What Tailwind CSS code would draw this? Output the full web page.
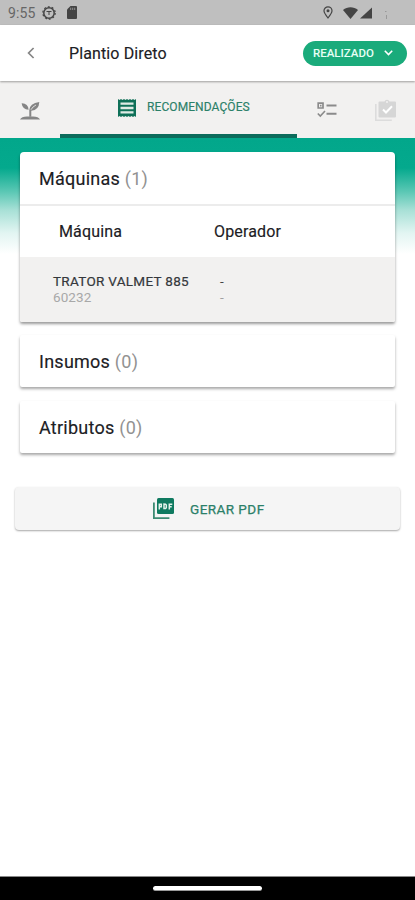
<!DOCTYPE html>
<html lang="pt-BR">
<head>
<meta charset="utf-8">
<meta name="viewport" content="width=device-width, initial-scale=1">
<title>Plantio Direto</title>
<script src="https://cdn.jsdelivr.net/npm/@tailwindcss/browser@4"></script>
</head>
<body class="bg-white font-['Roboto',sans-serif] text-[#1c2024]">
<div class="flex h-[900px] w-[415px] flex-col overflow-hidden bg-white">
  <!-- Status bar -->
  <div class="flex h-[25px] shrink-0 items-center bg-[#bfbfbf] pl-[8px] text-[#444]">
    <span class="w-[34px] pt-[1px] text-[14px] tracking-[0.1px] text-[#666]">9:55</span>
    <svg class="h-[14px] w-[14px]" viewBox="0 0 14 14" fill="none" stroke="currentColor"><circle cx="7" cy="7" r="5.2" stroke-width="1.5"/><circle cx="7" cy="7" r="6.2" stroke-width="1.2" stroke-dasharray="1.9 2"/><path d="M4.500 5.500h5M7 5.500v3.500" stroke-width="1"/></svg>
    <svg class="ml-[11px] h-[13px] w-[10px]" viewBox="0 0 10 13" fill="currentColor"><path d="M3.500 0H9a1 1 0 0 1 1 1v11a1 1 0 0 1-1 1H1a1 1 0 0 1-1-1V3.500z"/><path d="M3.700 1.700v2.300M5.700 1.700v2.300M7.700 1.700v2.300" stroke="#999" stroke-width=".9"/></svg>
    <svg class="ml-[246px] h-[13px] w-[10px]" viewBox="0 0 10 13" fill="none" stroke="currentColor"><path d="M5 12C2.600 9 1 6.900 1 4.800a4 4 0 0 1 8 0C9 6.900 7.400 9 5 12z" stroke-width="1.200"/><circle cx="5" cy="4.800" r="1.500" fill="currentColor" stroke="none"/></svg>
    <svg class="ml-[10px] h-[12px] w-[15px]" viewBox="0 0 15 12" fill="currentColor"><path d="M0 3C4.300-.8 10.700-.8 15 3L7.500 12z"/></svg>
    <svg class="ml-[2px] h-[12px] w-[12px]" viewBox="0 0 13 12" fill="currentColor"><path d="M13 0v12H0z"/></svg>
    <svg class="ml-[13px] h-[12px] w-[3px]" viewBox="0 0 3 12" fill="none" stroke="#999"><path d="M0 4.500h1.500M1.500 8v4"/></svg>
  </div>

  <!-- Header -->
  <header class="z-10 flex h-[56px] shrink-0 items-center bg-white pl-[27px] pr-[8px] shadow-[0_1px_2px_rgba(0,0,0,0.35)]">
    <svg class="h-[12px] w-[8px]" viewBox="0 0 8 12" fill="none" stroke="#858585" stroke-width="1.700"><path d="M6.600 1L1.600 6l5 5"/></svg>
    <h1 class="ml-[34px] pt-[2px] text-[16px] leading-none tracking-[0.12px] [-webkit-text-stroke:0.15px_currentColor]">Plantio Direto</h1>
    <button class="ml-auto flex h-[25px] w-[104px] items-center rounded-full bg-[#1aab7b] pl-[10px] text-[11.5px] font-medium tracking-[0px] text-[#e8fff6]">
      <span class="w-[71px] pt-[1px] text-left">REALIZADO</span>
      <svg class="h-[6px] w-[9px]" viewBox="0 0 9 6" fill="none" stroke="#fff" stroke-width="1.600"><path d="M.8.8l3.700 3.700L8.200.8"/></svg>
    </button>
  </header>

  <!-- Tabs -->
  <nav class="flex h-[57px] shrink-0 bg-[#f2f1f0]">
    <div class="flex w-[60px] justify-center pt-[19px]">
      <svg class="h-[20px] w-[20px]" viewBox="0 0 20 20" fill="#858585"><path d="M0 19.500q1.500-3 7-3h6q5.500 0 7 3z"/><path d="M9.300 16.700V10q.3-6.500 10-8q-.3 8-8 8.800v5.900z"/><path d="M1.600 3.300q6.500-.2 7 6.500Q2.500 9.500 1.600 3.300z"/><path d="M11 9.700q1.500-3 5-4.700" stroke="#f2f1f0" stroke-width=".8" fill="none"/></svg>
    </div>
    <div class="flex w-[237px] border-b-4 border-[#0c6b5b] pl-[58px] pt-[18px] text-[#0f7058]">
      <svg class="h-[18px] w-[18px]" viewBox="0 0 18 18" fill="currentColor"><path d="M0 0l1.500 1L3 0l1.500 1L6 0l1.500 1L9 0l1.500 1L12 0l1.500 1L15 0l1.500 1L18 0v18l-1.500-1-1.500 1-1.500-1-1.500 1-1.500-1L9 18l-1.500-1L6 18l-1.500-1L3 18l-1.500-1L0 18z"/><path d="M2.500 4.700h13M2.500 9h13M2.500 13.300h13" stroke="#dfebe5" stroke-width="2.300"/></svg>
      <span class="ml-[11px] mt-[2px] text-[12px] leading-[13px] tracking-[0.09px] text-[#2b8068] [-webkit-text-stroke:0.15px_currentColor]">RECOMENDAÇÕES</span>
    </div>
    <div class="flex w-[59px] justify-center pt-[21px]">
      <svg class="h-[16px] w-[20px]" viewBox="0 0 20 16" fill="none" stroke="#8b8b8b"><path d="M1.200 1.200h4.800v4.800H1.200zM3 3.600h1.500" stroke-width="1.700"/><path d="M9.500 3.500H19.500M9.500 11.700H19.500" stroke-width="2"/><path d="M.8 11.500l2.500 2.500L8 9" stroke-width="1.600"/></svg>
    </div>
    <div class="flex flex-1 justify-center pt-[18px]">
      <svg class="h-[22px] w-[21px]" viewBox="0 0 21 22"><path d="M.8 5v16.200h16" fill="none" stroke="#dcdcdc" stroke-width="1.600"/><path d="M4.500 2.500h5a2.700 2.700 0 0 1 5 0H20a1 1 0 0 1 1 1v14a1 1 0 0 1-1 1H4.500a1 1 0 0 1-1-1v-14a1 1 0 0 1 1-1z" fill="#d6d6d6"/><circle cx="12" cy="3" r="1" fill="#f2f1f0"/><path d="M8 10.500l3 3 6-6.200" fill="none" stroke="#fff" stroke-width="2"/></svg>
    </div>
  </nav>

  <!-- Content -->
  <main class="flex-1 bg-[linear-gradient(to_bottom,#02a78b_0px,#04a98d_30px,#5cc8b5_54px,#a7e0d6_72px,#e2f5f2_95px,#ffffff_116px)] px-[15px] pt-[14px]">
    <div class="px-[5px]">
      <section class="overflow-hidden rounded-t-[4px] rounded-b-[2px] shadow-[0_2px_3px_rgba(0,0,0,0.4)]">
        <h2 class="h-[54px] border-b-2 border-[#ececec] bg-white pl-[19px] text-[18px] leading-[54px] tracking-[0.25px]"><span class="[-webkit-text-stroke:0.15px_currentColor]">Máquinas</span> <span class="text-[#929292]">(1)</span></h2>
        <div class="flex h-[51px] items-center bg-white pl-[39px] text-[16px] tracking-[0.15px] [-webkit-text-stroke:0.15px_currentColor]"><span class="w-[155px]">Máquina</span><span>Operador</span></div>
        <div class="flex h-[65px] bg-[#f2f1f0] pl-[33px] pt-[16px] text-[13.5px] leading-[16px]">
          <div class="w-[167px]"><p class="tracking-[0.3px] text-[#35383c] [-webkit-text-stroke:0.2px_currentColor]">TRATOR VALMET 885</p><p class="tracking-[0.1px] text-[#a8a8a8]">60232</p></div>
          <div><p class="text-[#444]">-</p><p class="text-[#a0a0a0]">-</p></div>
        </div>
      </section>
      <section class="mt-[13px] h-[52px] rounded-[2px] bg-white pl-[19px] text-[18px] leading-[54px] tracking-[0.25px] shadow-[0_2px_3px_rgba(0,0,0,0.35)]"><span class="[-webkit-text-stroke:0.15px_currentColor]">Insumos</span> <span class="text-[#929292]">(0)</span></section>
      <section class="mt-[14px] h-[52px] rounded-[2px] bg-white pl-[19px] text-[18px] leading-[54px] tracking-[0.25px] shadow-[0_2px_3px_rgba(0,0,0,0.35)]"><span class="[-webkit-text-stroke:0.15px_currentColor]">Atributos</span> <span class="text-[#929292]">(0)</span></section>
    </div>
    <button class="mt-[34px] flex h-[43px] w-[385px] items-center rounded-[4px] bg-[#f5f5f5] pl-[138px] text-[#2b8068] shadow-[0_1px_2px_rgba(0,0,0,0.35)]">
      <svg class="h-[21px] w-[21px]" viewBox="0 0 21 21"><path d="M.9 4.500v15.600h15.500" fill="none" stroke="#3d8b73" stroke-width="1.800"/><rect x="4" width="17" height="16" rx="1.500" fill="#0f7a60"/><path d="M6.300 11.500V6.200h2v2.500h-2M11 6.100v4.500h1.500l.8-.8V7l-.8-.8zM16.300 11.500V6.200h3M16.300 8.700h2.400" fill="none" stroke="#e3f3ec" stroke-width="1.500"/></svg>
      <span class="ml-[16px] pt-[1px] text-[13.5px] tracking-[0.45px] [-webkit-text-stroke:0.25px_currentColor]">GERAR PDF</span>
    </button>
  </main>

  <!-- Gesture bar -->
  <div class="flex h-[24px] shrink-0 justify-center border-t border-[#888] bg-black pt-[9px]">
    <div class="h-[5px] w-[109px] rounded-full border-b border-[#999] bg-white"></div>
  </div>
</div>
</body>
</html>
